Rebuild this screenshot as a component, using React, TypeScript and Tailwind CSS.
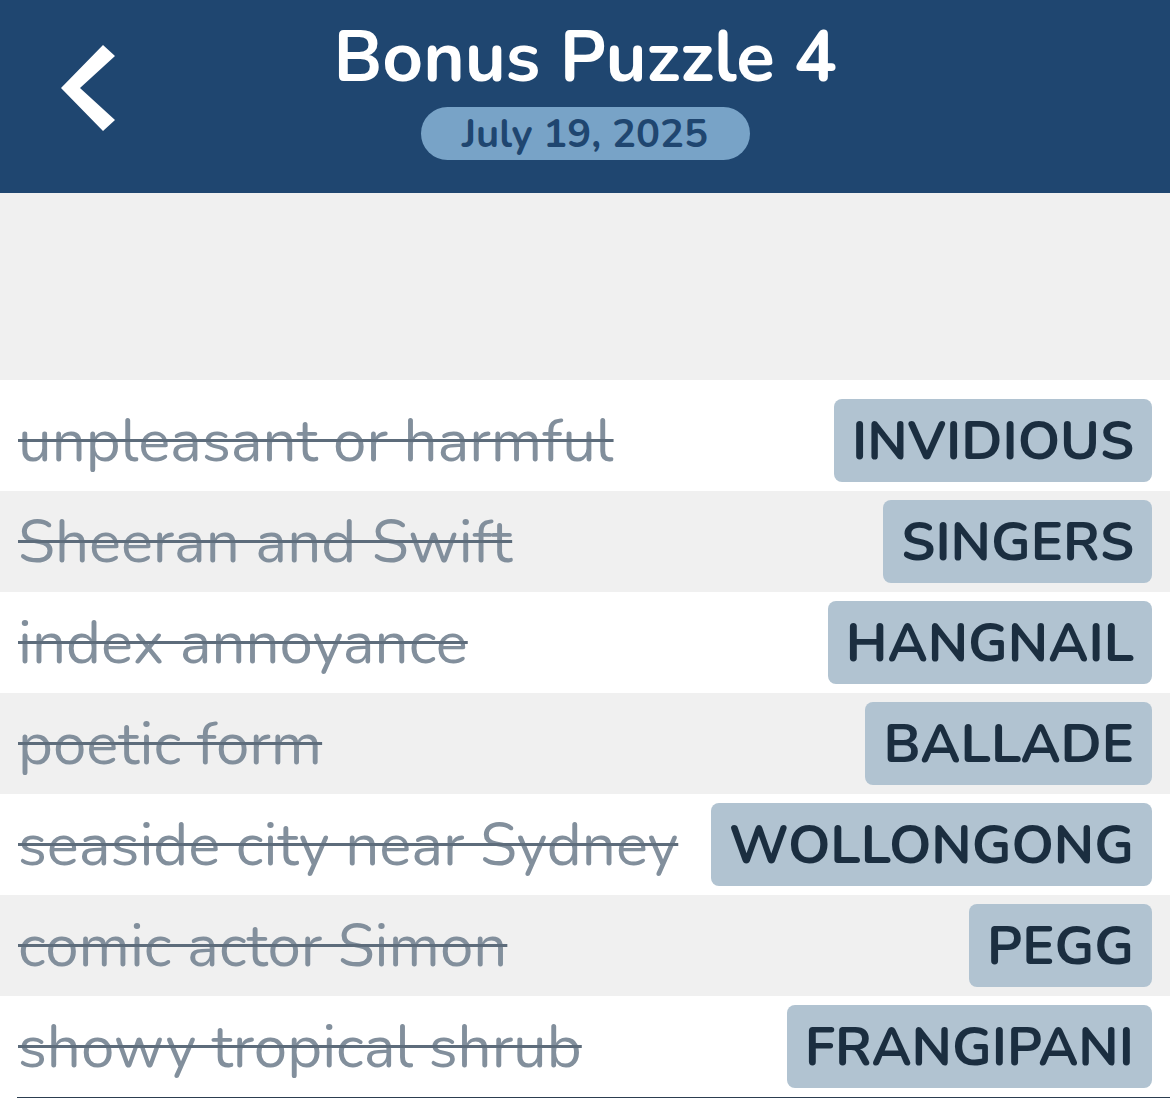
import React from "react";

const rows = [
  { clue: "unpleasant or harmful", answer: "INVIDIOUS" },
  { clue: "Sheeran and Swift", answer: "SINGERS" },
  { clue: "index annoyance", answer: "HANGNAIL" },
  { clue: "poetic form", answer: "BALLADE" },
  { clue: "seaside city near Sydney", answer: "WOLLONGONG" },
  { clue: "comic actor Simon", answer: "PEGG" },
  { clue: "showy tropical shrub", answer: "FRANGIPANI" },
];

export default function App() {
  return (
    <div
      className="w-[1170px] h-[1098px] overflow-hidden bg-[#f0f0f0] flex flex-col"
      style={{ fontFamily: '"Nunito", "Open Sans", "Liberation Sans", sans-serif' }}
    >
      <header className="relative h-[193px] shrink-0 bg-[#1f4670] flex flex-col items-center pt-[18px]">
        <button className="absolute left-[56px] top-[40px] w-[66px] h-[96px]" aria-label="Back">
          <svg width="66" height="96" viewBox="0 0 66 96">
            <polygon points="47,5 59,16 24,48 59,80 47,91 5,48" fill="#ffffff" />
          </svg>
        </button>
        <h1 className="text-white font-bold text-[71px] leading-[80px]">Bonus Puzzle 4</h1>
        <div className="mt-[9px] h-[53px] w-[329px] rounded-full bg-[#78a3c7] flex items-center justify-center">
          <span className="text-[#1f4670] font-bold text-[40px] leading-none">July 19, 2025</span>
        </div>
      </header>
      <div className="h-[187px] shrink-0" />
      <div className="bg-white pt-[10px] flex flex-col">
        {rows.map((r, i) => (
          <div
            key={r.clue}
            className={`h-[101px] shrink-0 flex items-center justify-between pl-[18px] pr-[18px] ${
              i % 2 === 0 ? "bg-white" : "bg-[#f0f0f0]"
            }`}
          >
            <span className="text-[60px] leading-none text-[#828f9c] line-through decoration-[#5d6c7b] decoration-[3px] whitespace-nowrap">
              {r.clue}
            </span>
            <span className="h-[83px] px-[18px] rounded-[8px] bg-[#b1c3d1] flex items-center text-[#1b2e40] font-bold text-[54px] leading-none whitespace-nowrap">
              {r.answer}
            </span>
          </div>
        ))}
        <div className="h-[2px] ml-[17px] bg-[#2c3e50]" />
      </div>
    </div>
  );
}
